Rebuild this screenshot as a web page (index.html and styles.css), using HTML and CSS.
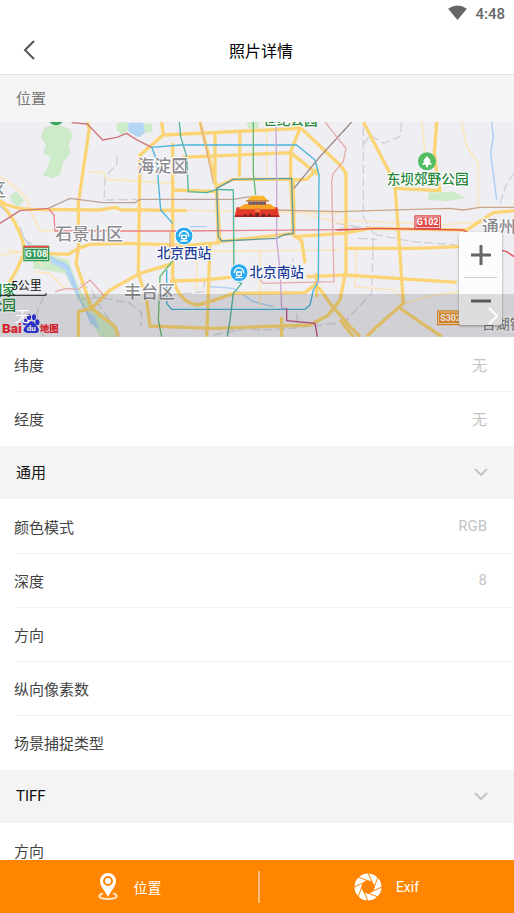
FILE: index.html
```html
<!DOCTYPE html>
<html lang="zh-CN">
<head>
    <meta charset="UTF-8">
    <meta name="viewport" content="width=device-width, initial-scale=1.0">
    <title>照片详情</title>
    <link rel="stylesheet" href="styles.css">
</head>
<body>
    <div class="status-bar">
        <svg class="wifi" viewBox="0 0 20 16" aria-hidden="true"><path d="M0 4Q10-3 20 4L10 16Z"/></svg>
        <span>4:48</span>
    </div>
    <header class="title-bar">
        <button class="back-button" aria-label="返回">
            <svg viewBox="0 0 12 20" aria-hidden="true"><path d="M11 1L2 10L11 19"/></svg>
        </button>
        <h1>照片详情</h1>
    </header>

    <main class="content">
        <h2 class="section-header location-header">位置</h2>
        <div class="map">
            <svg class="map-canvas" viewBox="0 6 1542 645" preserveAspectRatio="xMidYMid slice">
                <rect y="6" width="1542" height="645" fill="#eeeef3"/>
                <!-- parks -->
                <g fill="#cdebc8">
                    <path d="M135 22L170 12L210 28L218 48L205 75L212 100L190 125L180 165L155 175L128 165L145 140L150 110L130 98L138 75L122 50Z"/>
                    <path d="M30 225L50 215L72 240L55 262L35 245Z"/>
                    <path d="M350 8L382 6L385 30L365 45L350 30Z"/>
                    <path d="M430 12L455 10L458 35L435 38Z"/>
                    <path d="M100 400L150 405L205 420L235 500L265 550L350 615L358 651L300 651L265 590L235 540L195 460L100 445Z"/>
                    <path d="M740 6H775V25H745Z"/>
                    <path d="M1285 218L1360 215L1395 235L1340 243L1285 240Z"/>
                </g>
                <g fill="#b5d5f5">
                    <path d="M385 8L430 8L435 40L415 52L385 35Z"/>
                    <path d="M150 412L200 430L225 480L240 535L220 510L195 450L155 430Z"/>
                    <path d="M255 570L285 590L300 630L270 610Z"/>
                </g>
                <g class="river">
                    <path d="M0 258L35 290L65 345L95 385L150 410L205 440L235 530L275 600"/>
                    <path d="M1475 6L1480 50L1472 100L1490 240"/>
                    <path d="M570 320L620 320M630 500L700 505L760 545L820 560" stroke-width="2"/>
                </g>
                <!-- railways -->
                <g class="railway">
                    <path d="M350 108L350 135L315 170L312 240L410 238M60 320L75 360L110 380M240 490L275 510L300 560L360 640"/>
                    <path d="M235 538L300 532L390 550L425 580L423 620M130 530L110 580L130 650"/>
                    <path d="M1090 20L1090 290L1120 340L1115 520L1040 600M1090 75L1110 45L1150 70L1200 50L1205 6"/>
                    <path d="M1020 325L1110 320L1130 345L1240 365L1370 375M1075 355L1130 358"/>
                    <path d="M1500 250L1520 190L1542 160M510 525L610 515L615 480"/>
                    <path d="M640 645L740 625L780 630L870 625L1010 610M890 580L895 620"/>
                    <path d="M865 460L880 415M1010 310L1080 322"/>
                </g>
                <!-- minor roads -->
                <g class="road minor">
                    <path d="M0 170Q50 200 80 235L90 268L120 332L165 332M0 405L70 395M265 155L310 158L320 178L530 190"/>
                    <path d="M105 455L150 460L200 510M590 390L590 510M510 270L1020 280M510 395L1020 390"/>
                    <path d="M780 390L780 560M800 15L800 180M1020 300L1320 315L1440 305L1480 310"/>
                    <path d="M1265 6L1275 100L1290 130M1385 6L1400 80L1435 130L1435 260M1070 390L1065 500L1180 510L1220 550L1280 530L1380 515"/>
                    <path d="M20 390L90 400L130 440M700 300L700 470M920 285L1030 310"/>
                </g>
                <!-- main roads -->
                <g class="road">
                    <path d="M262 6L268 25L235 250L236 380L228 430L275 565L345 620L355 650"/>
                    <path d="M0 240C20 262 60 266 90 268L300 270L345 262L365 270L440 270L560 272"/>
                    <path d="M0 248Q50 300 70 370L72 400L50 450L20 500"/>
                    <path d="M72 385L130 400L205 403L235 385L270 373L380 370L560 376L660 368"/>
                    <path d="M485 6L490 45L420 105L415 460L440 540L450 618L640 625L930 615L985 585L1020 540L1038 450L1038 160L1020 135L900 22L870 10"/>
                    <path d="M470 60L490 45L900 25L872 95L872 175L880 345L905 362L915 430"/>
                    <path d="M518 70L518 470Q535 545 590 555Q620 550 700 520L915 518L950 490"/>
                    <path d="M545 112L872 98L955 165M600 6L610 45L650 200L655 365M720 35L718 170M645 40L645 190"/>
                    <path d="M235 650L235 575L275 565L330 510L420 460L520 430"/>
                    <path d="M650 200L700 178L880 178L882 340L660 365ZM520 210L650 215M870 180L920 178L955 145"/>
                    <path d="M630 370L625 520L620 650M510 483L610 480L710 470M880 350L1030 340L1110 325L1400 330L1480 278L1542 272"/>
                    <path d="M955 500L990 550L1050 620L1080 650M845 590L845 650M950 460L950 530"/>
                    <path d="M1090 6L1170 160L1185 200L1195 330L1210 550L1130 620L1100 650"/>
                    <path d="M1185 205L1320 212L1310 160L1303 100L1310 6"/>
                    <path d="M920 470L1038 465L1370 487M1038 385L1245 385L1380 380M1200 565L1325 650M1020 600L1060 650"/>
                </g>
                <!-- metro lines -->
                <g class="metro">
                    <path stroke="#d0767b" d="M215 8L262 12L308 60L350 52L380 40L408 58L455 82M0 310L60 272L145 265"/>
                    <path stroke="#bda49a" d="M145 265L210 235L310 248L405 248L420 238L700 238L750 230"/>
                    <path stroke="#c9a58c" d="M830 270L1020 275L1110 272L1350 265L1390 270L1440 262L1542 262"/>
                    <path stroke="#e98385" d="M145 265L162 285L165 333L520 333L1050 329"/>
                    <path stroke="#e35254" d="M1010 330L1130 325L1390 330L1480 385L1520 395L1542 410"/>
                    <path stroke="#4ab4dd" d="M518 310L482 270L470 120L455 82L540 75L890 75L945 120L957 165L955 485L940 510L930 555L915 568L515 568L500 550L500 450"/>
                    <path stroke="#52b39e" d="M538 6L542 50L560 110L565 215L620 218L650 208L700 210L702 480L725 490L700 520L690 600L682 650"/>
                    <path stroke="#5f9aa0" d="M650 205L700 178L875 175L880 340L850 345L830 355L665 363L655 350Z"/>
                    <path stroke="#68bb70" d="M760 6L760 160L767 225M520 420L480 470L475 600L485 650"/>
                    <path stroke="#cba9d5" d="M828 6L830 200L830 360L840 450L845 565L860 565"/>
                    <path stroke="#c24d8c" d="M860 565L860 602L945 610L952 650"/>
                    <path stroke="#9c8681" d="M1055 6L960 110L882 205"/>
                    <path stroke="#e3adab" d="M165 515L200 505L235 508L270 480L310 525M975 6L1038 85L1030 125L1000 160L995 185L1002 485L790 490L780 478"/>
                    <path stroke="#e0b088" d="M600 6L620 90L640 190M510 330L510 420"/>
                </g>
                <!-- district names -->
                <g class="label district">
                    <text x="412" y="155">海淀区</text>
                    <text x="166" y="359">石景山区</text>
                    <text x="372" y="533">丰台区</text>
                    <text x="-33" y="228">区</text>
                    <text x="1445" y="338">通州</text>
                    <text x="1445" y="626" class="small">台湖镇</text>
                </g>
                <g fill="#f2f2f5" stroke="#89898d" stroke-width="4">
                    <path d="M521 119H557V156H521Z"/>
                    <path d="M527 125L551 150M551 125L527 150"/>
                </g>
                <g class="label park">
                    <text x="1160" y="192">东坝郊野公园</text>
                    <text x="789" y="16">世纪公园</text>
                    <text x="-34" y="524">国家</text>
                    <text x="-34" y="570">公园</text>
                </g>
                <circle cx="168" cy="-6" r="22" fill="#35a65a"/>
                <circle cx="1281" cy="124" r="27" fill="#52bd63"/>
                <path d="M1281 108L1293 122H1288L1296 134H1284V142H1278V134H1266L1274 122H1269Z" fill="#fff"/>
                <!-- road badges -->
                <g class="badge">
                    <rect x="70" y="377" width="78" height="47" rx="2" fill="#2f9a59"/>
                    <rect x="75" y="385" width="68" height="34"/>
                    <path d="M72 380H146" stroke="#e5564d" stroke-width="6"/>
                    <text x="109" y="411">G108</text>
                    <rect x="1243" y="286" width="80" height="42" rx="2" fill="#de4b4c"/>
                    <rect x="1248" y="291" width="70" height="32"/>
                    <text x="1283" y="316">G102</text>
                    <rect x="1311" y="571" width="80" height="45" rx="2" fill="#f0962e"/>
                    <rect x="1316" y="576" width="70" height="35"/>
                    <text x="1352" y="603">S302</text>
                </g>
                <!-- railway stations -->
                <g class="label station">
                    <text x="470" y="414">北京西站</text>
                    <text x="748" y="471">北京南站</text>
                </g>
                <g id="station-icon">
                    <circle cx="552" cy="348" r="27" fill="#2aaaf0" stroke="#fff" stroke-width="3"/>
                    <path d="M538 350Q538 335 552 333Q566 335 566 350M545 346H559V356H545ZM541 363H563M552 356V363" fill="none" stroke="#fff" stroke-width="4"/>
                </g>
                <use href="#station-icon" x="165" y="110"/>
                <!-- Tiananmen -->
                <g>
                    <path d="M710 262H832L838 291H704Z" fill="#e23a28"/>
                    <path d="M704 286H838V291H704Z" fill="#b4231f"/>
                    <path d="M718 262L735 252H809L825 262V268H718Z" fill="#f4a427"/>
                    <path d="M745 245H798V254H745Z" fill="#566b85"/>
                    <path d="M748 245V254M760 245V254M772 245V254M784 245V254M796 245V254" stroke="#c8382c" stroke-width="4"/>
                    <path d="M738 243L755 227H790L806 243Z" fill="#f8b530"/>
                    <path d="M738 243H806" stroke="#a75a28" stroke-width="3"/>
                    <path d="M732 291V283H740V291M748 291V281H757V291M766 291V279H777V291M786 291V281H795V291M803 291V283H811V291" fill="#742320"/>
                    <path d="M765 264H780V276H765Z" fill="#f07a3b"/>
                </g>
                <!-- scale and logo -->
                <text class="scale" x="33" y="511">5公里</text>
                <path d="M0 526H138V519" fill="none" stroke="#222" stroke-width="3"/>
                <g class="logo">
                    <text x="6" y="638">Bai</text>
                    <text x="120" y="637" class="logo-map">地图</text>
                    <g fill="#2f36e0">
                        <ellipse cx="75" cy="606" rx="7" ry="10"/>
                        <ellipse cx="87" cy="592" rx="6" ry="9"/>
                        <ellipse cx="102" cy="592" rx="6" ry="9"/>
                        <ellipse cx="112" cy="607" rx="6" ry="9"/>
                        <path d="M94 604C104 604 105 614 113 621C123 638 110 641 94 638C77 641 65 636 74 622C83 614 84 604 94 604Z"/>
                    </g>
                    <text x="94" y="634" class="paw">du</text>
                </g>
            </svg>
            <div class="zoom-control">
                <button aria-label="放大"><svg viewBox="0 0 22 22" aria-hidden="true"><path d="M1 11H21M11 1V21"/></svg></button>
                <button aria-label="缩小"><svg viewBox="0 0 22 22" aria-hidden="true"><path d="M1 11H21"/></svg></button>
            </div>
            <a class="address" href="#">
                <span>无</span>
                <svg viewBox="0 0 10 18" aria-hidden="true"><path d="M1 1L9 9L1 17"/></svg>
            </a>
        </div>

        <dl class="rows">
            <div class="row"><dt>纬度</dt><dd>无</dd></div>
            <div class="row"><dt>经度</dt><dd>无</dd></div>
        </dl>
        <h2><button class="section-header">通用
            <svg class="chevron" viewBox="0 0 14 8" aria-hidden="true"><path d="M1 1L7 7L13 1"/></svg></button></h2>
        <dl class="rows">
            <div class="row"><dt>颜色模式</dt><dd>RGB</dd></div>
            <div class="row"><dt>深度</dt><dd>8</dd></div>
            <div class="row"><dt>方向</dt><dd></dd></div>
            <div class="row"><dt>纵向像素数</dt><dd></dd></div>
            <div class="row"><dt>场景捕捉类型</dt><dd></dd></div>
        </dl>
        <h2><button class="section-header">TIFF
            <svg class="chevron" viewBox="0 0 14 8" aria-hidden="true"><path d="M1 1L7 7L13 1"/></svg></button></h2>
        <dl class="rows">
            <div class="row"><dt>方向</dt><dd></dd></div>
        </dl>
    </main>

    <nav class="tab-bar">
        <button class="tab">
            <svg viewBox="0 0 28 28" aria-hidden="true">
                <path d="M14 0A8 8 0 0 0 6 8C6 13 11 18 14 24C17 18 22 13 22 8A8 8 0 0 0 14 0ZM14 3A5 5 0 1 1 14 13A5 5 0 0 1 14 3Z" fill="#fff" fill-rule="evenodd"/>
                <circle cx="14" cy="8" r="3" fill="#fff"/>
                <path d="M9 20.500C3 22 4 26 14 26C24 26 25 22 19 20.500" fill="none" stroke="#ffe3c2" stroke-width="2"/>
            </svg>
            <span>位置</span>
        </button>
        <button class="tab">
            <svg viewBox="0 0 28 28" aria-hidden="true">
                <circle cx="14" cy="14" r="10" fill="none" stroke="#fff" stroke-width="7"/>
                <g stroke="#ff8500" stroke-width="1">
                    <path id="blade" d="M4 4L17 9"/>
                    <use href="#blade" transform="rotate(45 14 14)"/>
                    <use href="#blade" transform="rotate(90 14 14)"/>
                    <use href="#blade" transform="rotate(135 14 14)"/>
                    <use href="#blade" transform="rotate(180 14 14)"/>
                    <use href="#blade" transform="rotate(225 14 14)"/>
                    <use href="#blade" transform="rotate(270 14 14)"/>
                    <use href="#blade" transform="rotate(315 14 14)"/>
                </g>
            </svg>
            <span>Exif</span>
        </button>
    </nav>
</body>
</html>
```
FILE: styles.css
```css
:root {
    --accent: #ff8500; --panel: #f4f4f4; --line: #f0f0f0;
    --text: #444444; --heading: #111111; --muted: #c4c4c4;
}
* { box-sizing: border-box; }
body { margin: 0; height: 100vh; display: flex; flex-direction: column; background: #fff; color: var(--text); font-family: Roboto, "Noto Sans CJK SC", sans-serif; font-size: 15px; }
button { border: 0; padding: 0; background: none; font: inherit; color: inherit; cursor: pointer; }
h1, h2, dl, dd { margin: 0; font-size: inherit; font-weight: 400; }
svg { display: block; fill: none; }

.status-bar { flex: none; display: flex; align-items: center; justify-content: flex-end; gap: 8px; height: 28px; padding-right: 9px; color: #666; font-weight: 500; }
.wifi { width: 19px; height: 15px; margin-bottom: 3px; fill: #666; }
.title-bar { flex: none; display: grid; grid-template-columns: 60px 1fr 60px; align-items: center; height: 47px; padding-bottom: 2px; border-bottom: 1px solid #e5e5e5; }
.title-bar h1 { padding-left: 8px; font-size: 16px; color: #000; text-align: center; }
.back-button { height: 44px; padding-left: 23px; }
.back-button svg { width: 12px; height: 20px; stroke: #555; stroke-width: 2; }

.content { flex: 1; min-height: 0; overflow-y: auto; scrollbar-width: none; }
.section-header { display: flex; align-items: center; justify-content: space-between; width: 100%; height: 53px; padding: 0 26px 2px 16px; background: var(--panel); color: var(--heading); }
.location-header { height: 47px; color: #777; }
.chevron { width: 14px; height: 8px; stroke: var(--muted); stroke-width: 2; }
.rows { padding-top: 1px; }
.row { display: flex; justify-content: space-between; align-items: center; height: 54px; padding: 0 27px 2px 14px; background: linear-gradient(var(--line), var(--line)) 16px 100% / 100% 1px no-repeat; }
.row:last-child { background: none; }
.row dd { color: var(--muted); }

.map { position: relative; height: 215px; overflow: hidden; }
.map-canvas { width: 100%; height: 100%; }
.road path { fill: none; stroke: #fbd575; stroke-width: 10; stroke-linejoin: round; }
.road.minor path { stroke: #fbe6bd; stroke-width: 5; }
.river path { stroke: #a9cdf5; stroke-width: 4; }
.railway path { stroke: #d0d0d6; stroke-width: 4; stroke-dasharray: 28 10; }
.metro path { stroke-width: 4; stroke-linejoin: round; }
.label text { paint-order: stroke; stroke: #fff; stroke-width: 6; font-family: "Noto Sans CJK SC", sans-serif; }
.district { fill: #8c8c90; font-size: 51px; font-weight: 500; }
.district .small { font-size: 42px; }
.park { fill: #23873a; font-size: 41px; font-weight: 500; }
.station { fill: #203e99; font-size: 41px; font-weight: 500; }
.badge rect:nth-of-type(even) { stroke: #fff; stroke-width: 2; }
.badge text { fill: #fff; font-size: 27px; font-weight: 700; text-anchor: middle; }
.scale { fill: #111; font-size: 36px; }
.logo { fill: #f02833; font-size: 41px; font-weight: 900; }
.logo .logo-map { font-size: 28px; }
.logo .paw { fill: #fff; font-size: 24px; text-anchor: middle; }

/* floats over the map */
.zoom-control { position: absolute; right: 12px; bottom: 12px; width: 43px; padding: 0 5px 2px; background: #fcfcfc; border-radius: 2px; box-shadow: 0 1px 3px rgba(0, 0, 0, .35); }
.zoom-control button { display: grid; place-items: center; width: 100%; height: 45px; }
.zoom-control button + button { height: 46px; border-top: 1px solid #ccc; }
.zoom-control svg { width: 22px; height: 22px; stroke: #666; stroke-width: 3; }
.address { position: absolute; left: 0; right: 0; bottom: 0; display: flex; align-items: center; justify-content: space-between; height: 43px; padding: 0 16px 0 15px; background: rgba(0, 0, 0, .12); color: #fff; text-decoration: none; }
.address svg { width: 10px; height: 18px; stroke: #fff; stroke-width: 2; }

.tab-bar { flex: none; display: flex; height: 53px; background: var(--accent); }
.tab { position: relative; flex: 1; display: flex; align-items: center; justify-content: center; gap: 12px; padding-right: 4px; color: #fff; font-size: 14px; }
.tab svg { width: 28px; height: 28px; }
.tab + .tab { gap: 14px; padding: 0; }
.tab + .tab::before { content: ""; position: absolute; left: -1px; width: 2px; height: 32px; background: #ffbd77; }
```
